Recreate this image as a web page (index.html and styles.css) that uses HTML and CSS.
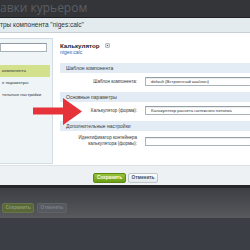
FILE: index.html
```html
<!DOCTYPE html>
<html lang="ru">
<head>
<meta charset="utf-8">
<link rel="stylesheet" href="styles.css">
</head>
<body>
<div class="page-title">авки курьером</div>
<div class="dialog">
  <div class="dlg-head">тры компонента "niges:calc"</div>
  <div class="dlg-body">
    <aside class="side">
      <div class="search"></div>
      <ul class="nav">
        <li class="active">компонента</li>
        <li>е параметры</li>
        <li>тельные настройки</li>
      </ul>
    </aside>
    <div class="content">
      <div class="comp-title"><span>Калькулятор</span><span class="info-icon"></span></div>
      <div class="comp-code">niges:calc</div>
      <div class="section">Шаблон компонента</div>
      <div class="row">
        <div class="label">Шаблон компонента:</div>
        <div class="field">default (Встроенный шаблон)</div>
      </div>
      <div class="section">Основные параметры</div>
      <div class="row">
        <div class="label">Калькулятор (форма):</div>
        <div class="field">Калькулятор расчета натяжного потолка</div>
      </div>
      <div class="section">Дополнительные настройки</div>
      <div class="row">
        <div class="label">Идентификатор контейнера<br>калькулятора (формы):</div>
        <div class="field"></div>
      </div>
    </div>
  </div>
  <div class="dlg-foot">
    <button class="btn btn-save">Сохранить</button>
    <button class="btn btn-cancel">Отменить</button>
  </div>
</div>
<div class="under-line"></div>
<div class="behind">
  <span class="ghost ghost-save">Сохранить</span>
  <span class="ghost ghost-cancel">Отменить</span>
</div>
<svg class="arrow" width="52" height="30" viewBox="0 0 52 30">
  <polygon points="1,10.5 31,10.5 31,1 50,14.5 31,28 31,17.5 1,17.5" fill="#e6333a"/>
</svg>
</body>
</html>
```

FILE: styles.css
```css
* { box-sizing: border-box; }
html, body { margin: 0; padding: 0; }
body {
  width: 250px;
  height: 250px;
  overflow: hidden;
  position: relative;
  background: #3b3e44;
  font-family: "Liberation Sans", Arial, sans-serif;
}
.page-title {
  height: 17px;
  background: #333539;
  color: #5b5e63;
  font: 12px/15px "Open Sans", sans-serif;
  white-space: nowrap;
}
.dialog {
  width: 250px;
  background: #fff;
  border-top: 1px solid #1f2124;
}
.dlg-head {
  height: 15px;
  background: #e3ebee;
  border-bottom: 1px solid #c5cfd4;
  font-size: 6.5px;
  line-height: 14px;
  color: #2f3336;
  white-space: nowrap;
}
.dlg-body {
  display: flex;
  align-items: flex-start;
  padding: 5px 0 1px;
  background: #fff;
}
.side {
  width: 53px;
  height: 126px;
  flex: none;
  background: #eff4f7;
  border: 1px solid #d3dce2;
  border-left: none;
  padding-top: 4px;
}
.search {
  width: 47px;
  height: 9px;
  background: #fff;
  border: 1px solid #a8b2b9;
  border-top-color: #8e99a1;
}
.nav {
  list-style: none;
  margin: 13px 0 0;
  padding: 0;
}
.nav li {
  width: 50px;
  height: 12px;
  line-height: 12px;
  font-size: 4.4px;
  color: #33383c;
  padding-left: 2px;
  white-space: nowrap;
}
.nav li.active { background: #d3e18c; }
.content {
  flex: 1;
  padding-left: 7px;
}
.comp-title {
  display: flex;
  align-items: center;
  gap: 5px;
  height: 8px;
  margin-top: 3px;
  font-weight: bold;
  font-size: 6.2px;
  color: #1e2124;
}
.info-icon {
  width: 5px;
  height: 5px;
  border-radius: 1px;
  background: #dfe4e8;
  border: 1px solid #b6bec4;
  position: relative;
}
.info-icon::after {
  content: "";
  position: absolute;
  left: 1px;
  top: 1px;
  width: 1px;
  height: 1px;
  background: #55606a;
}
.comp-code {
  font-size: 5px;
  line-height: 6px;
  color: #2a67b1;
  margin-bottom: 8px;
}
.section {
  height: 10px;
  line-height: 10px;
  margin-top: 1px;
  background: #e3ecf5;
  padding-left: 6px;
  font-size: 5px;
  color: #3a3f44;
  white-space: nowrap;
}
.row {
  display: flex;
  align-items: center;
  padding: 4px 0 5px;
}
.label {
  width: 85px;
  flex: none;
  padding-right: 8px;
  text-align: right;
  font-size: 4.5px;
  line-height: 6px;
  color: #333;
  white-space: nowrap;
}
.field {
  flex: 1;
  height: 9px;
  border: 1px solid #a9b3ba;
  border-right: none;
  border-top-color: #939ea6;
  background: #fff;
  font-size: 4.3px;
  line-height: 7px;
  padding-left: 5px;
  color: #333;
  white-space: nowrap;
  overflow: hidden;
  box-shadow: inset 0 1px 1px rgba(0,0,0,.08);
}
.dlg-foot {
  height: 20px;
  background: #edf1f3;
  border-top: 1px solid #dae1e5;
  display: flex;
  align-items: flex-start;
  gap: 2px;
  padding: 7px 0 0 93px;
}
.btn {
  height: 10px;
  margin: 0;
  padding: 0;
  font: bold 4.7px/8px "Liberation Sans", Arial, sans-serif;
  border-radius: 2px;
  border: 1px solid;
  text-align: center;
}
.btn-save {
  width: 33px;
  background: linear-gradient(#95c33c, #6b9c14);
  border-color: #5d8a12;
  color: #fff;
}
.btn-cancel {
  width: 30px;
  background: linear-gradient(#ffffff, #e2e7ea);
  border-color: #bfc7cc;
  color: #414d55;
}
.under-line {
  height: 3px;
  background: #242629;
}
.behind {
  height: 30px;
  background: linear-gradient(#3b3e43, #57595d);
  display: flex;
  align-items: flex-start;
  gap: 3px;
  padding: 15px 0 0 2px;
}
.ghost {
  height: 10px;
  border-radius: 2px;
  border: 1px solid;
  font: bold 4.7px/8px "Liberation Sans", Arial, sans-serif;
  text-align: center;
}
.ghost-save {
  width: 32px;
  background: #5a6739;
  border-color: #67754a;
  color: #8d9a70;
}
.ghost-cancel {
  width: 30px;
  background: #56595e;
  border-color: #5f6267;
  color: #7c7f84;
}
.arrow {
  position: absolute;
  left: 32px;
  top: 97px;
}
```
